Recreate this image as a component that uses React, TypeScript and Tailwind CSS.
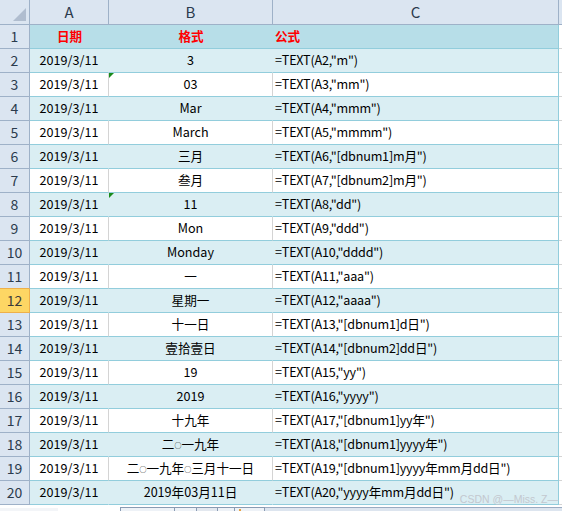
import React from "react";

const rows: [string, string][] = [
  ["3", '=TEXT(A2,"m")'],
  ["03", '=TEXT(A3,"mm")'],
  ["Mar", '=TEXT(A4,"mmm")'],
  ["March", '=TEXT(A5,"mmmm")'],
  ["三月", '=TEXT(A6,"[dbnum1]m月")'],
  ["叁月", '=TEXT(A7,"[dbnum2]m月")'],
  ["11", '=TEXT(A8,"dd")'],
  ["Mon", '=TEXT(A9,"ddd")'],
  ["Monday", '=TEXT(A10,"dddd")'],
  ["一", '=TEXT(A11,"aaa")'],
  ["星期一", '=TEXT(A12,"aaaa")'],
  ["十一日", '=TEXT(A13,"[dbnum1]d日")'],
  ["壹拾壹日", '=TEXT(A14,"[dbnum2]dd日")'],
  ["19", '=TEXT(A15,"yy")'],
  ["2019", '=TEXT(A16,"yyyy")'],
  ["十九年", '=TEXT(A17,"[dbnum1]yy年")'],
  ["二○一九年", '=TEXT(A18,"[dbnum1]yyyy年")'],
  ["二○一九年○三月十一日", '=TEXT(A19,"[dbnum1]yyyy年mm月dd日")'],
  ["2019年03月11日", '=TEXT(A20,"yyyy年mm月dd日")'],
];

function renderB(text: string) {
  const parts = text.split("○");
  return parts.map((p, i) => (
    <React.Fragment key={i}>
      {i > 0 && <span className="text-[7px] leading-none translate-y-[1px]">○</span>}
      {p}
    </React.Fragment>
  ));
}

function Tri() {
  return (
    <div className="absolute left-0 top-0 w-0 h-0 border-t-[5px] border-r-[5px] border-t-[#1a8a1a] border-r-transparent" />
  );
}

export default function App() {
  const font = { fontFamily: '"Noto Sans CJK SC", "Noto Sans", sans-serif' };
  return (
    <div className="relative w-[562px] h-[511px] overflow-hidden bg-white" style={font}>
      <div className="grid grid-cols-[30px_79px_164px_286px_3px] text-[12.6px] text-black">
        {/* header row */}
        <div className="h-[25px] bg-[#dbe5f1] border-r border-b border-[#9eb1c8] relative">
          <div className="absolute right-[3px] bottom-[3px] w-0 h-0 border-l-[13px] border-b-[13px] border-l-transparent border-b-[#b0bdcf]" />
        </div>
        {["A", "B", "C"].map((c) => (
          <div
            key={c}
            className="h-[25px] bg-[#dbe5f1] border-r border-b border-[#9eb1c8] flex items-center justify-center text-[15px] text-[#2b3b4d]"
          >
            {c}
          </div>
        ))}
        <div className="h-[25px] bg-[#dbe5f1] border-b border-[#9eb1c8]" />

        {/* row 1 */}
        <div className="h-[24px] bg-[#dbe5f1] border-r border-b border-[#9eb1c8] flex items-center justify-center text-[14px] text-[#2b3b4d]">
          1
        </div>
        <div className="h-[24px] bg-[#b7dee8] border-b border-[#92cddc] flex items-center justify-center font-bold text-[#ff0000]">
          日期
        </div>
        <div className="h-[24px] bg-[#b7dee8] border-b border-[#92cddc] flex items-center justify-center font-bold text-[#ff0000]">
          格式
        </div>
        <div className="h-[24px] bg-[#b7dee8] border-r border-b border-[#92cddc] flex items-center pl-[2px] font-bold text-[#ff0000]">
          公式
        </div>
        <div className="h-[24px] border-b border-[#d4d4d4]" />

        {rows.map(([b, c], i) => {
          const n = i + 2;
          const band = n % 2 === 0;
          const sel = n === 12;
          const preSel = n === 11;
          const bg = band ? "bg-[#daeef3]" : "bg-white";
          const vline = band ? "border-r-[#daeef3]" : "border-r-[#d4d4d4]";
          return (
            <React.Fragment key={n}>
              <div
                className={
                  "h-[24px] border-r border-b flex items-center justify-center text-[14px] " +
                  (sel
                    ? "bg-[#fdd664] border-[#eeb04a] text-[#3a3a3a]"
                    : preSel
                    ? "bg-[#dbe5f1] border-r-[#9eb1c8] border-b-[#eeb04a] text-[#2b3b4d]"
                    : "bg-[#dbe5f1] border-[#9eb1c8] text-[#2b3b4d]")
                }
              >
                {n}
              </div>
              <div className={`h-[24px] ${bg} border-r ${vline} border-b border-b-[#92cddc] flex items-center justify-center`}>
                2019/3/11
              </div>
              <div className={`relative h-[24px] ${bg} border-r ${vline} border-b border-b-[#92cddc] flex items-center justify-center whitespace-nowrap`}>
                {(n === 3 || n === 8) && <Tri />}
                {renderB(b)}
              </div>
              <div className={`h-[24px] ${bg} border-r border-r-[#92cddc] border-b border-b-[#92cddc] flex items-center pl-[2px] whitespace-nowrap tracking-[-0.2px]`}>
                {c}
              </div>
              <div className="h-[24px] border-b border-[#d4d4d4]" />
            </React.Fragment>
          );
        })}
      </div>

      {/* bottom sheet tab strip */}
      <div className="flex h-[7px]">
        <div className="w-[58px] border-t-[3px] border-t-white border-b border-[#b7c3d3] bg-[#f3f5f8]" />
        <div className="w-[62px] bg-white" />
        <div className="w-[55px] mt-[2px] border border-b-0 border-[#8a9bb3] bg-[#eef2f7]" />
        <div className="w-[22px] mt-[2px] border-t border-r border-[#8a9bb3] bg-[#eef2f7]" />
        <div className="w-[21px] mt-[2px] border-t border-r border-[#8a9bb3] bg-[#e3e8ef]" />
        <div className="w-[17px] mt-[2px] border-t border-r border-[#8a9bb3] bg-[#eef2f7]" />
        <div className="w-[30px] mt-[2px] border-t border-r border-[#8a9bb3] bg-[#eef2f7] relative">
          <div className="absolute left-[4px] top-[1px] w-[2px] h-[3px] bg-[#e8a040]" />
        </div>
        <div className="flex-1 mt-[2px] border-t border-[#9aabc2] bg-[#dde5ef]" />
      </div>

      {/* watermark */}
      <div
        className="absolute right-[4px] bottom-[7px] text-[10.5px] leading-none text-[#c3c8cf] whitespace-nowrap"
        style={{ fontFamily: '"Liberation Sans", "Noto Sans CJK SC", sans-serif' }}
      >
        CSDN @—Miss. Z—
      </div>
    </div>
  );
}
